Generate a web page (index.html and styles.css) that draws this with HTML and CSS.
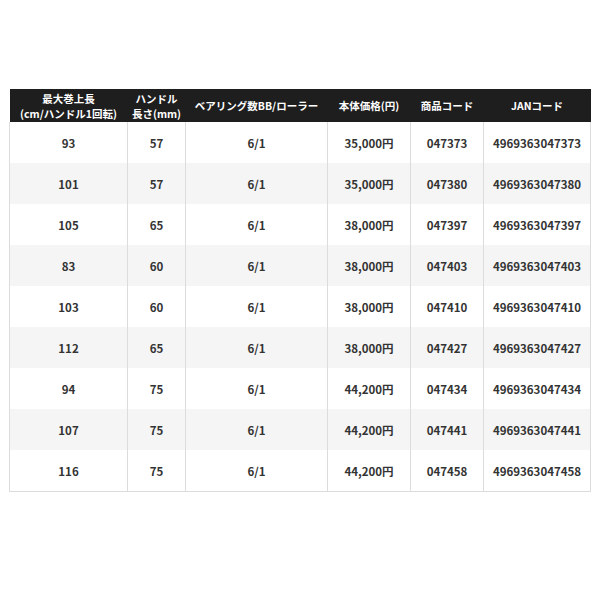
FILE: index.html
```html
<!DOCTYPE html>
<html lang="ja">
<head>
<meta charset="utf-8">
<link rel="stylesheet" href="styles.css">
</head>
<body>
<div class="wrap">
<table class="spec">
<colgroup>
<col class="c1"><col class="c2"><col class="c3"><col class="c4"><col class="c5"><col class="c6">
</colgroup>
<thead>
<tr>
<th>最大巻上長<br>(cm/ハンドル1回転)</th>
<th>ハンドル<br>長さ(mm)</th>
<th>ベアリング数BB/ローラー</th>
<th>本体価格(円)</th>
<th>商品コード</th>
<th>JANコード</th>
</tr>
</thead>
<tbody>
<tr><td>93</td><td>57</td><td>6/1</td><td>35,000円</td><td>047373</td><td>4969363047373</td></tr>
<tr><td>101</td><td>57</td><td>6/1</td><td>35,000円</td><td>047380</td><td>4969363047380</td></tr>
<tr><td>105</td><td>65</td><td>6/1</td><td>38,000円</td><td>047397</td><td>4969363047397</td></tr>
<tr><td>83</td><td>60</td><td>6/1</td><td>38,000円</td><td>047403</td><td>4969363047403</td></tr>
<tr><td>103</td><td>60</td><td>6/1</td><td>38,000円</td><td>047410</td><td>4969363047410</td></tr>
<tr><td>112</td><td>65</td><td>6/1</td><td>38,000円</td><td>047427</td><td>4969363047427</td></tr>
<tr><td>94</td><td>75</td><td>6/1</td><td>44,200円</td><td>047434</td><td>4969363047434</td></tr>
<tr><td>107</td><td>75</td><td>6/1</td><td>44,200円</td><td>047441</td><td>4969363047441</td></tr>
<tr><td>116</td><td>75</td><td>6/1</td><td>44,200円</td><td>047458</td><td>4969363047458</td></tr>
</tbody>
</table>
</div>
</body>
</html>
```
FILE: styles.css
```css
html, body {
  margin: 0;
  padding: 0;
  background: #fff;
}
.wrap {
  padding: 89px 10px 0 9px;
}
.spec {
  width: 581px;
  table-layout: fixed;
  border-collapse: collapse;
  font-family: "Noto Sans CJK JP", "Noto Sans", sans-serif;
  font-weight: 700;
  font-size: 11.5px;
  color: #333;
  text-align: center;
}
.c1 { width: 118px; }
.c2 { width: 58px; }
.c3 { width: 142px; }
.c4 { width: 83px; }
.c5 { width: 73px; }
.c6 { width: 107px; }
.spec th {
  background: #1e1e1e;
  color: #fff;
  height: 33px;
  padding: 0;
  line-height: 15px;
  font-size: 10.5px;
  white-space: nowrap;
}
.spec td {
  height: 41px;
  padding: 0;
  border-left: 1px solid #dcdcdc;
  border-right: 1px solid #dcdcdc;
}
.spec tbody tr:nth-child(even) td {
  background: #f5f5f5;
}
.spec tbody tr:last-child td {
  border-bottom: 1px solid #dcdcdc;
}
```
